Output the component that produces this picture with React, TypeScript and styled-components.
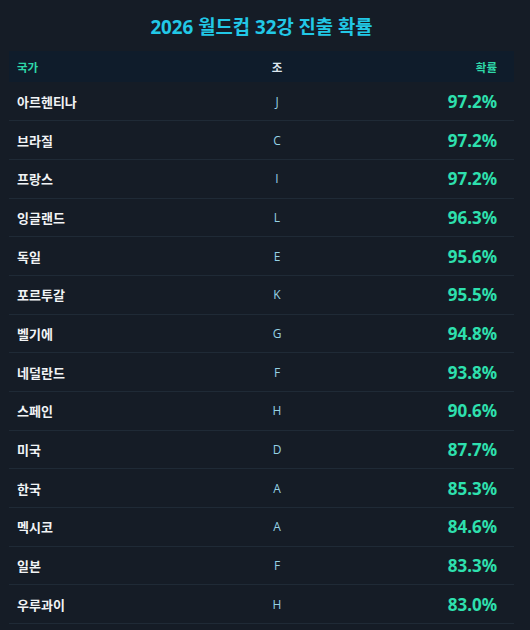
import styled, { createGlobalStyle } from 'styled-components';

const GlobalStyle = createGlobalStyle`
  html, body {
    margin: 0;
    padding: 0;
    background: #151c26;
  }
  body {
    font-family: "Noto Sans", "Noto Sans CJK KR", sans-serif;
    color: #e5e7eb;
  }
`;

const Page = styled.div`
  padding: 0 16px 0 9px;
  min-height: 630px;
  background: #151c26;
`;

const Title = styled.h1`
  margin: 0;
  height: 51px;
  display: flex;
  align-items: center;
  justify-content: center;
  font-size: 18.8px;
  font-weight: 700;
  color: #22c8e6;
`;

const Table = styled.table`
  width: 100%;
  border-collapse: collapse;
  table-layout: fixed;
`;

const HeadRow = styled.tr`
  background: #0f1c2b;
  height: 31px;
`;

const Th = styled.th<{ $align: 'left' | 'center' | 'right'; $muted?: boolean }>`
  padding: 0 8px;
  font-size: 11.5px;
  font-weight: 700;
  text-align: ${(p) => p.$align};
  color: ${(p) => (p.$muted ? '#dde6ee' : '#2ed7a8')};
  &:last-child {
    padding-right: 17px;
  }
`;

const Row = styled.tr`
  height: 38.7px;
  border-bottom: 1px solid #1f2a36;
`;

const Country = styled.td`
  padding: 0 8px;
  font-size: 13px;
  font-weight: 700;
  color: #f1f3f5;
`;

const Group = styled.td`
  text-align: center;
  font-family: "Open Sans", "Noto Sans", sans-serif;
  font-size: 12px;
  font-weight: 500;
  color: #96d2e4;
`;

const Prob = styled.td`
  padding: 0 17px 0 8px;
  text-align: right;
  font-size: 17px;
  font-weight: 700;
  color: #2ee0ae;
`;

const rows: [string, string, string][] = [
  ['아르헨티나', 'J', '97.2%'],
  ['브라질', 'C', '97.2%'],
  ['프랑스', 'I', '97.2%'],
  ['잉글랜드', 'L', '96.3%'],
  ['독일', 'E', '95.6%'],
  ['포르투갈', 'K', '95.5%'],
  ['벨기에', 'G', '94.8%'],
  ['네덜란드', 'F', '93.8%'],
  ['스페인', 'H', '90.6%'],
  ['미국', 'D', '87.7%'],
  ['한국', 'A', '85.3%'],
  ['멕시코', 'A', '84.6%'],
  ['일본', 'F', '83.3%'],
  ['우루과이', 'H', '83.0%'],
];

export default function App() {
  return (
    <Page>
      <GlobalStyle />
      <Title>2026 월드컵 32강 진출 확률</Title>
      <Table>
        <colgroup>
          <col style={{ width: 220 }} />
          <col style={{ width: 96 }} />
          <col />
        </colgroup>
        <thead>
          <HeadRow>
            <Th $align="left">국가</Th>
            <Th $align="center" $muted>조</Th>
            <Th $align="right">확률</Th>
          </HeadRow>
        </thead>
        <tbody>
          {rows.map(([name, group, prob]) => (
            <Row key={name}>
              <Country>{name}</Country>
              <Group>{group}</Group>
              <Prob>{prob}</Prob>
            </Row>
          ))}
        </tbody>
      </Table>
    </Page>
  );
}
